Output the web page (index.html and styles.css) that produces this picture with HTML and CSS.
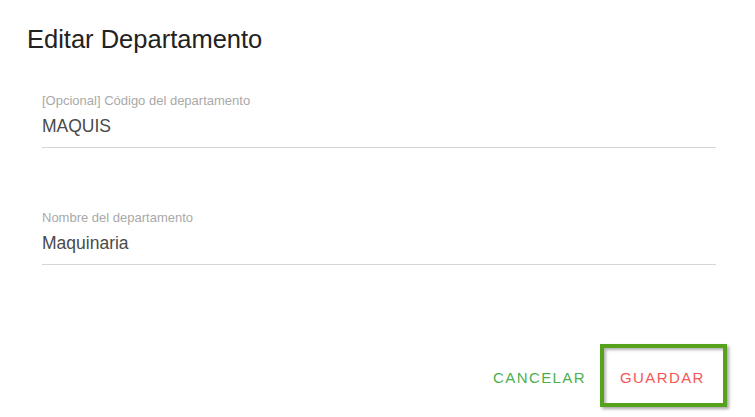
FILE: index.html
```html
<!DOCTYPE html>
<html lang="es">
<head>
<meta charset="utf-8">
<title>Editar Departamento</title>
<link rel="stylesheet" href="styles.css">
</head>
<body>
<div class="dialog">
  <h1 class="title">Editar Departamento</h1>
  <div class="content">
    <div class="field">
      <label class="label">[Opcional] Código del departamento</label>
      <div class="value">MAQUIS</div>
    </div>
    <div class="field">
      <label class="label">Nombre del departamento</label>
      <div class="value">Maquinaria</div>
    </div>
  </div>
  <div class="actions">
    <button class="btn btn-cancel">CANCELAR</button>
    <div class="highlight">
      <button class="btn btn-save">GUARDAR</button>
    </div>
  </div>
</div>
</body>
</html>
```
FILE: styles.css
```css
html, body {
  margin: 0;
  padding: 0;
  background: #ffffff;
}
body {
  font-family: "Liberation Sans", Arial, sans-serif;
  width: 755px;
  height: 417px;
  overflow: hidden;
}
.dialog {
  display: flex;
  flex-direction: column;
}
.title {
  margin: 0;
  padding: 24px 0 0 27px;
  font-size: 25.5px;
  font-weight: normal;
  line-height: 30px;
  color: #222222;
}
.content {
  display: flex;
  flex-direction: column;
  gap: 62px;
  padding: 39px 39px 0 42px;
}
.field {
  display: flex;
  flex-direction: column;
  border-bottom: 1px solid #d6d6d6;
  padding-bottom: 10px;
}
.label {
  font-size: 13px;
  line-height: 15px;
  color: #a9a9a9;
}
.value {
  margin-top: 8px;
  font-size: 17.5px;
  line-height: 21px;
  color: #4a4a4a;
}
.actions {
  display: flex;
  justify-content: flex-end;
  align-items: flex-start;
  gap: 14px;
  padding: 79px 28px 0 0;
}
.btn {
  background: none;
  border: none;
  font-family: "Liberation Sans", Arial, sans-serif;
  font-size: 15px;
  line-height: 17px;
  letter-spacing: 1.4px;
  padding: 0;
  cursor: pointer;
}
.btn-cancel {
  margin-top: 25px;
  color: #4caf50;
}
.btn-save {
  color: #f55656;
}
.highlight {
  box-sizing: border-box;
  width: 127px;
  height: 63px;
  border: 4px solid #57a21d;
  box-shadow: 2px 2px 3px rgba(0,0,0,0.35), inset 2px 2px 3px rgba(0,0,0,0.3);
  display: flex;
  align-items: flex-start;
  padding: 21px 0 0 16px;
}
```
